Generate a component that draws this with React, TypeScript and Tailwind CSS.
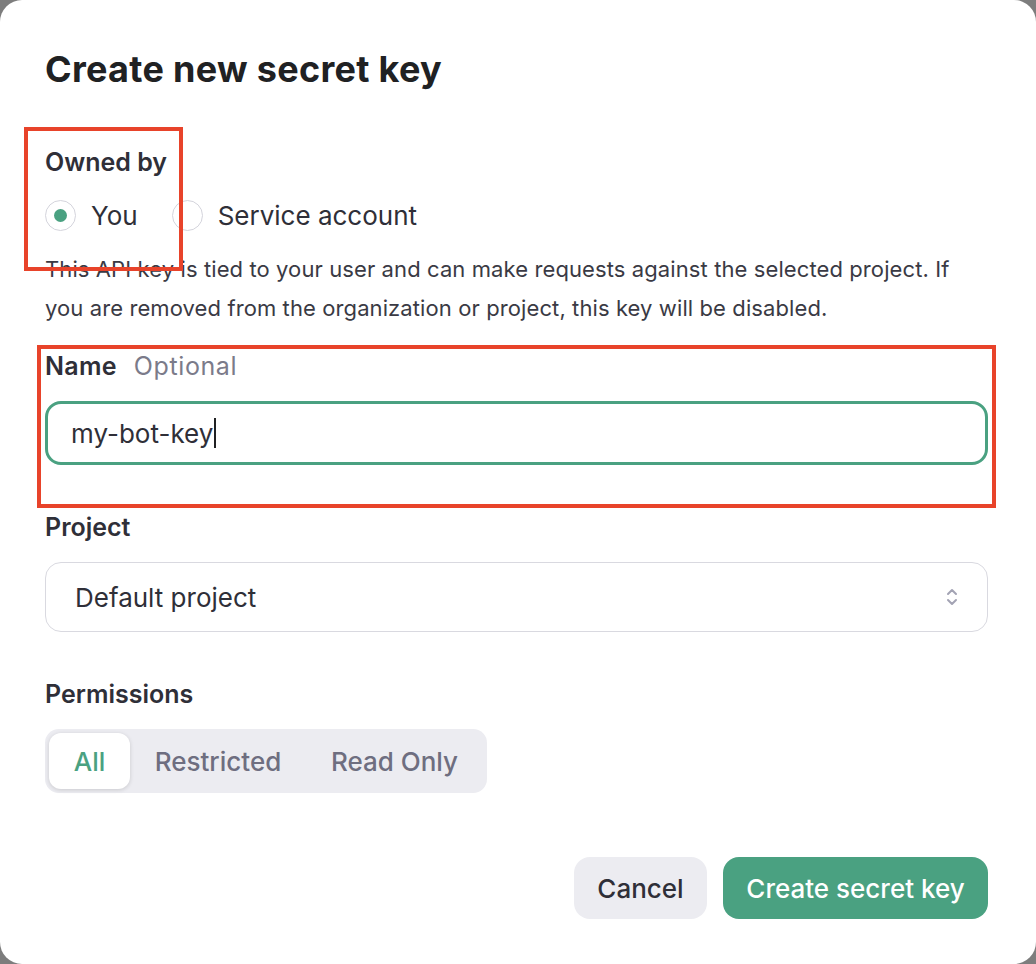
import React from 'react';

const font = { fontFamily: 'Inter, "Noto Sans", sans-serif' };

function Radio({ checked, label }: { checked?: boolean; label: string }) {
  return (
    <label className="flex items-center gap-[15px]">
      <span className="flex h-[31px] w-[31px] items-center justify-center rounded-full border-[1.5px] border-[#d4d4dc] bg-white">
        {checked && <span className="h-[13px] w-[13px] rounded-full bg-[#4aa181]" />}
      </span>
      <span className="text-[26px] leading-[30px] text-[#2f2f38]">{label}</span>
    </label>
  );
}

export default function App() {
  return (
    <div className="min-h-screen bg-[#7d7d7d]" style={font}>
      <div className="relative flex h-[964px] flex-col rounded-[22px] bg-white pl-[45px] pr-[48px] pt-[49px]">
        <h1 className="text-[36px] font-bold leading-[40px] tracking-[0.3px] text-[#202123]">
          Create new secret key
        </h1>

        <div className="mt-[59px] text-[25px] font-semibold leading-[28px] text-[#2f2f38]">Owned by</div>
        <div className="mt-[24px] flex items-center gap-[34px]">
          <Radio checked label="You" />
          <Radio label="Service account" />
        </div>

        <p className="mt-[19px] text-[22px] leading-[39px] tracking-[0.1px] text-[#3a3a44]">
          This API key is tied to your user and can make requests against the selected project. If you are removed from
          the organization or project, this key will be disabled.
        </p>

        <div className="mt-[24px] flex items-baseline gap-[17px] text-[25px] leading-[28px]">
          <span className="font-semibold tracking-[0.3px] text-[#2f2f38]">Name</span>
          <span className="tracking-[0.6px] text-[#7b7b8a]">Optional</span>
        </div>
        <div className="mt-[21px] flex h-[64px] items-center rounded-[16px] border-[3px] border-[#4aa181] px-[23px]">
          <span className="text-[26px] text-[#2f2f38]">my-bot-key</span>
          <span className="ml-[1px] h-[30px] w-[2px] bg-[#202123]" />
        </div>

        <div className="mt-[48px] text-[25px] font-semibold leading-[28px] text-[#2f2f38]">Project</div>
        <div className="mt-[21px] flex h-[70px] items-center justify-between rounded-[16px] border-[1.5px] border-[#d9d9e0] pl-[29px] pr-[28px]">
          <span className="text-[26px] text-[#2f2f38]">Default project</span>
          <svg width="14" height="20" viewBox="0 0 14 20" fill="none" stroke="#a3a3b4" strokeWidth="2" strokeLinecap="round" strokeLinejoin="round">
            <path d="M3 7l4-4 4 4" />
            <path d="M3 13l4 4 4-4" />
          </svg>
        </div>

        <div className="mt-[48px] text-[25px] font-semibold leading-[28px] text-[#2f2f38]">Permissions</div>
        <div className="mt-[21px] flex h-[64px] w-[442px] items-center rounded-[14px] bg-[#ececf1] p-[4px]">
          <div className="flex h-full w-[81px] items-center justify-center rounded-[12px] bg-white text-[26px] font-medium text-[#4aa181] shadow-[0_1px_4px_rgba(0,0,0,0.15)]">
            All
          </div>
          <div className="flex h-full w-[176px] items-center justify-center text-[26px] font-medium text-[#6e6e80]">Restricted</div>
          <div className="flex h-full flex-1 items-center justify-center text-[26px] font-medium text-[#6e6e80]">Read Only</div>
        </div>

        <div className="mt-[64px] flex justify-end gap-[16px]">
          <button className="h-[62px] w-[133px] rounded-[16px] bg-[#ececf1] text-[26px] font-medium text-[#2f2f38]">
            Cancel
          </button>
          <button className="h-[62px] w-[265px] rounded-[16px] bg-[#4aa181] text-[26px] font-medium text-white">
            Create secret key
          </button>
        </div>

        <div className="pointer-events-none absolute left-[24px] top-[127px] h-[144px] w-[159px] border-[4px] border-[#e8432a]" />
        <div className="pointer-events-none absolute left-[37px] top-[345px] h-[163px] w-[959px] border-[4px] border-[#e8432a]" />
      </div>
    </div>
  );
}
